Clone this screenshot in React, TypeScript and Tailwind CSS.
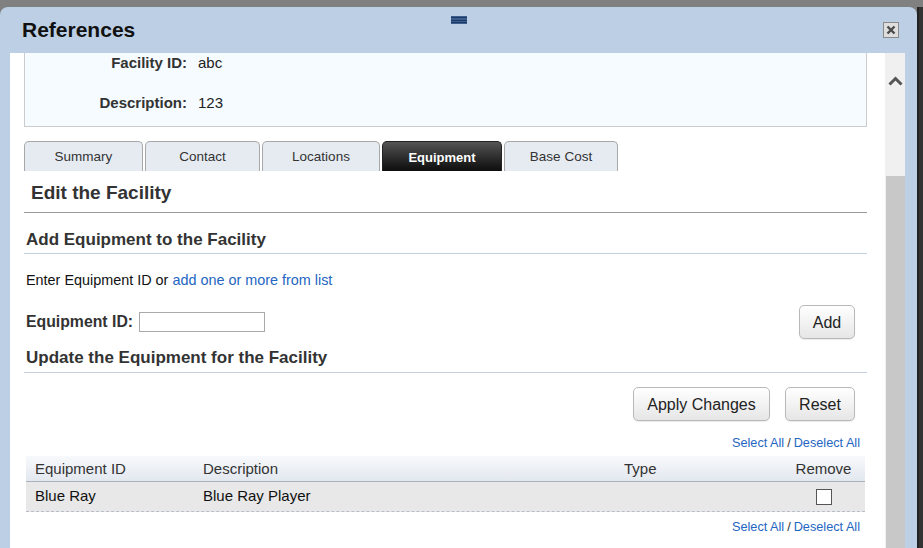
const font = "font-['Liberation_Sans',Arial,sans-serif]";

const tabs = [
  { label: 'Summary', w: 'w-[119px]' },
  { label: 'Contact', w: 'w-[115px]' },
  { label: 'Locations', w: 'w-[118px]' },
  { label: 'Equipment', w: 'w-[120px]', active: true },
  { label: 'Base Cost', w: 'w-[114px]' },
];

const SelectLinks = () => (
  <div className="mr-[7px] flex h-[16px] items-center justify-end text-[12.7px] leading-none">
    <a className="text-[#2466c2]">Select All</a>
    <span className="px-[3px] text-[#333]">/</span>
    <a className="text-[#2466c2]">Deselect All</a>
  </div>
);

const Button = ({ children, w }: { children: string; w: string }) => (
  <button
    className={`h-[34px] ${w} rounded-[5px] border border-[#b9b9b9] bg-gradient-to-b from-[#ffffff] to-[#e6e6e6] pt-[1px] text-[16px] text-[#222] shadow-[0_1px_1px_rgba(0,0,0,0.08)]`}
  >
    {children}
  </button>
);

export default function App() {
  return (
    <div className={`flex h-[548px] w-[923px] flex-col overflow-hidden bg-[#3a3a3a] ${font}`}>
      <div className="h-[7px] shrink-0 bg-[#808080]" />
      <div className="flex min-h-0 flex-1 bg-[#808080]">
        {/* dialog */}
        <div className="flex w-[917px] shrink-0 flex-col rounded-t-[8px] bg-[#bccfe4]">
          <div className="relative flex h-[46px] shrink-0 items-center justify-between pl-[22px] pr-[18px]">
            <h1 className="text-[21px] font-bold text-[#111]">References</h1>
            <div className="absolute left-1/2 top-[9px] flex h-[8px] w-[16px] -translate-x-1/2 flex-col justify-between bg-[#3d5f8f] py-[1px]">
              <div className="h-px bg-[#1d3a66]" />
              <div className="h-px bg-[#1d3a66]" />
              <div className="h-px bg-[#1d3a66]" />
            </div>
            <button className="flex h-[16px] w-[16px] items-center justify-center border border-[#8a8a8a] bg-[#dedede]">
              <svg width="10" height="10" viewBox="0 0 10 10">
                <path d="M1.5 1.5 L8.5 8.5 M8.5 1.5 L1.5 8.5" stroke="#4a4a4a" strokeWidth="2.4" />
              </svg>
            </button>
          </div>

          <div className="flex min-h-0 flex-1 pl-[10px] pr-[12px]">
            {/* content */}
            <div className="w-[875px] shrink-0 bg-white pl-[14px] pr-[18px]">
              <div className="border-x border-b border-[#cccccc] bg-[#f5fbff] pb-[14px] text-[15px]">
                <div className="grid grid-cols-[162px_1fr] gap-x-[11px] gap-y-[22px] pt-[1px]">
                  <div className="text-right font-bold leading-[18px] text-[#333]">Facility ID:</div>
                  <div className="leading-[18px] text-[#222]">abc</div>
                  <div className="text-right font-bold leading-[18px] text-[#333]">Description:</div>
                  <div className="leading-[18px] text-[#222]">123</div>
                </div>
              </div>

              <div className="mt-[14px] flex gap-[2px]">
                {tabs.map((t) =>
                  t.active ? (
                    <div
                      key={t.label}
                      className={`flex h-[30px] ${t.w} items-center justify-center rounded-t-[5px] border border-b-0 border-[#222] bg-gradient-to-b from-[#555555] to-[#0e0e0e] pt-[2px] text-[13px] font-bold text-white`}
                    >
                      {t.label}
                    </div>
                  ) : (
                    <div
                      key={t.label}
                      className={`flex h-[30px] ${t.w} items-center justify-center rounded-t-[5px] border border-b-0 border-[#a8a8a8] bg-[#e6ebf2] pt-[2px] text-[13.5px] text-[#333]`}
                    >
                      {t.label}
                    </div>
                  )
                )}
              </div>

              <div className="h-[42px] border-b border-[#999] pl-[7px] pt-[12px]">
                <h2 className="text-[19px] font-bold leading-[20px] text-[#333]">Edit the Facility</h2>
              </div>

              <div className="flex h-[41px] items-end border-b border-[#c3d0e0] pb-[3px] pl-[2px]">
                <h3 className="text-[17px] font-bold leading-[20px] text-[#333]">Add Equipment to the Facility</h3>
              </div>

              <p className="mt-[16px] h-[20px] pl-[2px] text-[14.4px] leading-[20px] text-[#111]">
                Enter Equipment ID or <a className="text-[#2466c2]">add one or more from list</a>
              </p>

              <div className="mt-[15px] flex h-[34px] items-center justify-between pl-[2px] pr-[12px]">
                <div className="flex items-center gap-[6px]">
                  <label className="text-[15.8px] font-bold text-[#333]">Equipment ID:</label>
                  <input className="h-[20px] w-[126px] border border-[#a9a9a9] bg-white" />
                </div>
                <Button w="w-[56px]">Add</Button>
              </div>

              <div className="flex h-[34px] items-end border-b border-[#c3d0e0] pb-[4px] pl-[2px]">
                <h3 className="text-[17px] font-bold leading-[20px] text-[#333]">Update the Equipment for the Facility</h3>
              </div>

              <div className="mt-[14px] flex justify-end gap-[15px] pr-[12px]">
                <Button w="w-[137px]">Apply Changes</Button>
                <Button w="w-[70px]">Reset</Button>
              </div>

              <div className="mt-[14px]">
                <SelectLinks />
              </div>

              <div className="mx-[2px] mt-[5px] text-[15px]">
                <div className="grid h-[26px] grid-cols-[168px_421px_167px_1fr] items-center border-b border-[#a9b1bd] bg-gradient-to-b from-[#f7f9fc] to-[#e3e8ef] pt-[2px] text-[#333]">
                  <div className="pl-[9px]">Equipment ID</div>
                  <div className="pl-[9px]">Description</div>
                  <div className="pl-[9px]">Type</div>
                  <div className="text-center">Remove</div>
                </div>
                <div className="grid h-[30px] grid-cols-[168px_421px_167px_1fr] items-center border-b border-dashed border-[#b8bec8] bg-[#e8e8e8] text-[#111]">
                  <div className="pl-[9px]">Blue Ray</div>
                  <div className="pl-[9px]">Blue Ray Player</div>
                  <div />
                  <div className="flex justify-center">
                    <div className="h-[16px] w-[16px] border border-[#555] bg-white" />
                  </div>
                </div>
              </div>

              <div className="mt-[7px]">
                <SelectLinks />
              </div>
            </div>

            {/* scrollbar */}
            <div className="flex w-[20px] shrink-0 flex-col bg-[#f0f0f0]">
              <div className="flex h-[123px] justify-center pt-[23px]">
                <svg width="15" height="10" viewBox="0 0 15 10">
                  <path d="M1.5 8.5 L7.5 2.5 L13.5 8.5" fill="none" stroke="#555" strokeWidth="3" />
                </svg>
              </div>
              <div className="ml-px flex-1 bg-[#c8c8c8]" />
            </div>
          </div>
        </div>
        <div className="flex-1 border-l-2 border-[#222] bg-[#333]" />
      </div>
    </div>
  );
}
